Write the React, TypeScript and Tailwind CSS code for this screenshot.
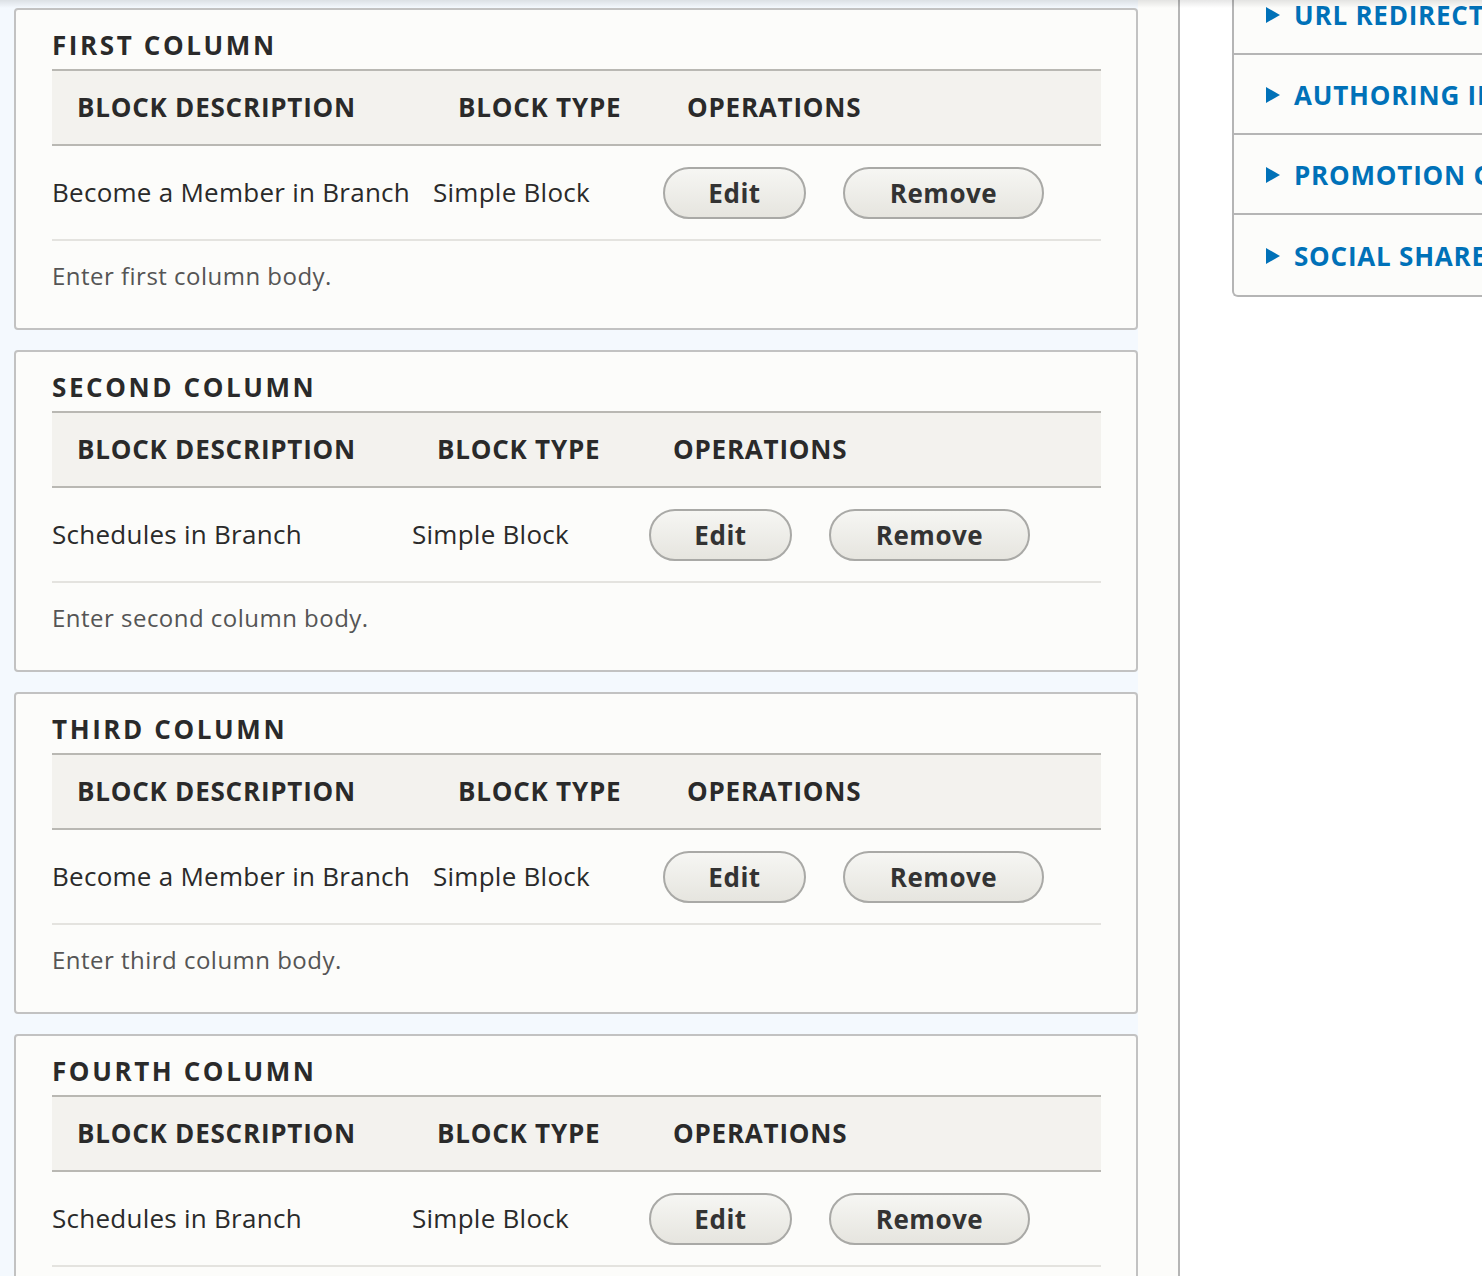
import React from "react";

type Row = { desc: string; type: string };
type Card = { title: string; row: Row; body: string; cols: [string, string] };

const cards: Card[] = [
  { title: "First column", row: { desc: "Become a Member in Branch", type: "Simple Block" }, body: "Enter first column body.", cols: ["w-[381px]", "w-[230px]"] },
  { title: "Second column", row: { desc: "Schedules in Branch", type: "Simple Block" }, body: "Enter second column body.", cols: ["w-[360px]", "w-[237px]"] },
  { title: "Third column", row: { desc: "Become a Member in Branch", type: "Simple Block" }, body: "Enter third column body.", cols: ["w-[381px]", "w-[230px]"] },
  { title: "Fourth column", row: { desc: "Schedules in Branch", type: "Simple Block" }, body: "Enter fourth column body.", cols: ["w-[360px]", "w-[237px]"] },
];

const sideItems = ["URL redirects", "Authoring information", "Promotion options", "Social share"];

function Button({ label, w }: { label: string; w: string }) {
  return (
    <button
      className={`${w} h-[52px] rounded-full border-2 border-[#a9a9a6] bg-gradient-to-b from-[#f6f6f3] to-[#e6e5df] text-[26px] font-bold text-[#333] tracking-[0.02em] leading-none`}
    >
      {label}
    </button>
  );
}

function ColumnCard({ card }: { card: Card }) {
  return (
    <div className="w-[1124px] shrink-0 rounded-[4px] border-2 border-[#c2c2c2] bg-[#fcfcfa] pl-[36px] pr-[35px] pt-[17px] pb-[34px]">
      <h2 className="text-[26px] leading-[36px] font-bold uppercase tracking-[0.1em] text-[#2a2a2a] mb-[6px]">
        {card.title}
      </h2>
      <table className="w-full table-fixed border-collapse">
        <thead>
          <tr className="bg-[#f3f2ee] border-y-2 border-[#b9b8b3]">
            <th className={`${card.cols[0]} h-[75px] pl-[25px] text-left text-[26px] font-bold uppercase text-[#2a2a2a] tracking-[0.03em]`}>Block description</th>
            <th className={`${card.cols[1]} pl-[25px] text-left text-[26px] font-bold uppercase text-[#2a2a2a] tracking-[0.03em]`}>Block type</th>
            <th className="pl-[24px] text-left text-[26px] font-bold uppercase text-[#2a2a2a] tracking-[0.03em]">Operations</th>
          </tr>
        </thead>
        <tbody>
          <tr className="border-b-2 border-[#e4e3df]">
            <td className="h-[95px] text-[26px] text-[#2a2a2a] whitespace-nowrap tracking-[0.01em]">{card.row.desc}</td>
            <td className="text-[26px] text-[#2a2a2a] whitespace-nowrap tracking-[0.01em]">{card.row.type}</td>
            <td>
              <div className="flex items-center gap-[37px]">
                <Button label="Edit" w="w-[143px]" />
                <Button label="Remove" w="w-[201px]" />
              </div>
            </td>
          </tr>
        </tbody>
      </table>
      <p className="mt-[17px] text-[24px] leading-[36px] text-[#555] tracking-[0.02em]">{card.body}</p>
    </div>
  );
}

export default function App() {
  return (
    <div
      className="relative flex h-[1276px] w-[1482px] overflow-hidden bg-white"
      style={{ fontFamily: '"Open Sans", "DejaVu Sans", sans-serif' }}
    >
      <div className="w-[1180px] shrink-0 border-r-2 border-[#b5b5b5] bg-[#fcfcfa]">
        <div className="flex w-[1138px] flex-col gap-[20px] bg-[#f4f9fe] pl-[14px] pt-[8px] h-full">
          {cards.map((c) => (
            <ColumnCard key={c.title} card={c} />
          ))}
        </div>
      </div>
      <div className="flex-1 pl-[52px]">
        <div className="mt-[-27px] w-[420px] rounded-bl-[6px] border-l-2 border-b-2 border-t-2 border-[#b5b5b5] bg-[#fcfcfa]">
          {sideItems.map((s, i) => (
            <div
              key={s}
              className={`flex h-[80px] items-center gap-[14px] pl-[32px] pt-[2px] whitespace-nowrap ${i < sideItems.length - 1 ? "border-b-2 border-[#b5b5b5]" : ""}`}
            >
              <svg width="14" height="16" viewBox="0 0 14 16" className="shrink-0">
                <polygon points="0,0 14,8 0,16" fill="#0071b8" />
              </svg>
              <span className="text-[26px] font-bold uppercase text-[#0071b8] tracking-[0.03em]">{s}</span>
            </div>
          ))}
        </div>
      </div>
      <div className="pointer-events-none absolute inset-x-0 top-0 h-[8px] bg-gradient-to-b from-black/10 to-transparent" />
    </div>
  );
}
